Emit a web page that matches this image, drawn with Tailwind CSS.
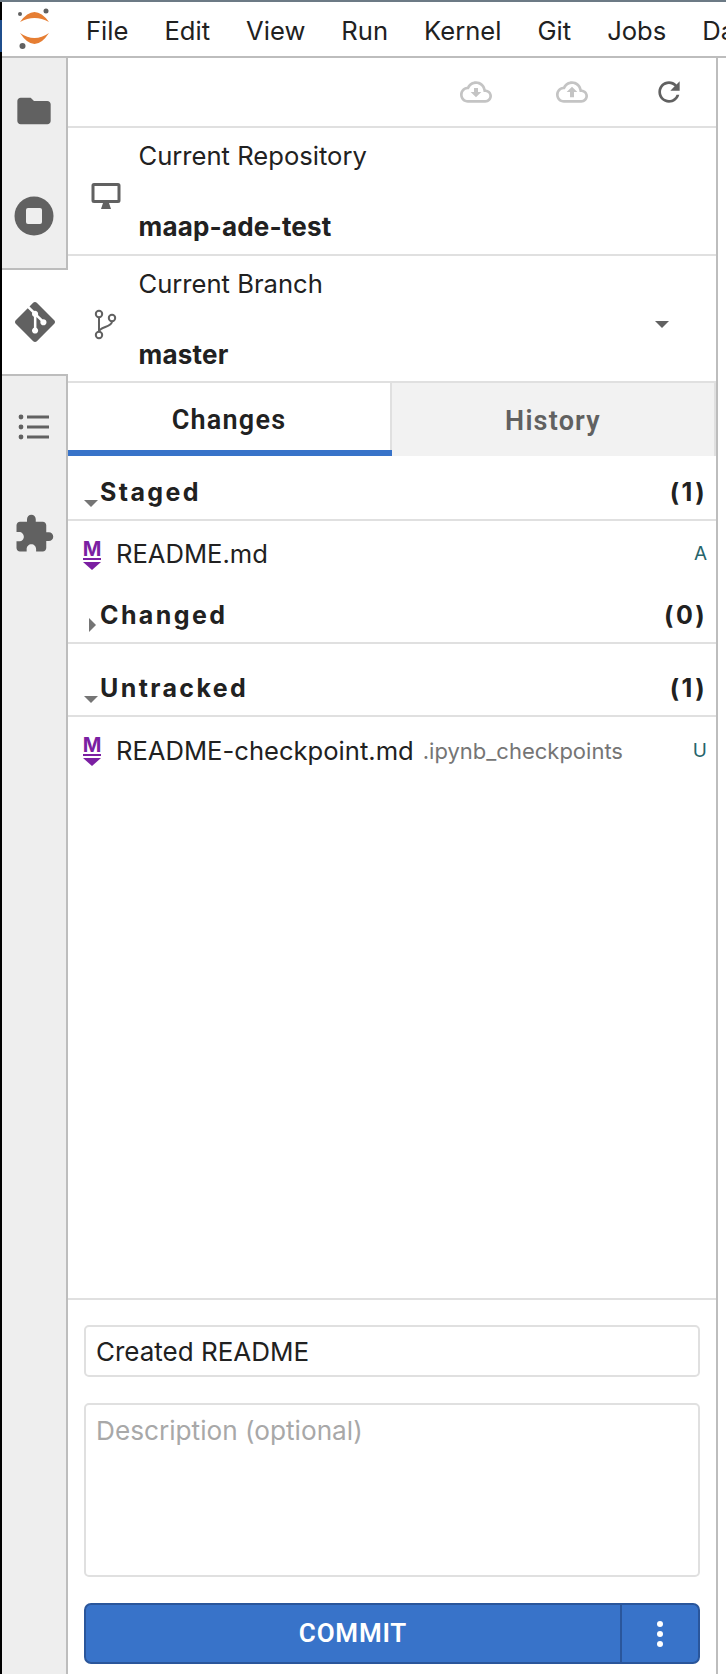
<!DOCTYPE html>
<html lang="en">
<head>
  <meta charset="UTF-8" />
  <title>JupyterLab Git</title>
  <script src="https://cdn.jsdelivr.net/npm/@tailwindcss/browser@4"></script>
</head>
<body class="bg-white font-['Inter','Liberation_Sans',sans-serif] text-[#212121] h-[1674px] w-[726px] overflow-hidden flex flex-col">
  <div class="h-[2px] bg-[#6c7a85] shrink-0"></div>
  <div class="flex flex-1 min-h-0">
    <!-- window edge -->
    <div class="w-[2px] bg-black shrink-0 pt-[18px]">
      <div class="h-[32px] bg-[#1f4e8c]"></div>
    </div>

    <div class="flex-1 min-w-0 flex flex-col">
      <!-- menu bar -->
      <div class="h-[56px] shrink-0 flex border-b-2 border-[#bdbdbd] overflow-hidden">
        <div class="w-[66px] shrink-0">
          <svg width="66" height="54" viewBox="0 0 66 54">
            <circle cx="18" cy="12" r="2" fill="#616161"/>
            <circle cx="44" cy="9" r="2.5" fill="#616161"/>
            <circle cx="20.5" cy="44" r="3" fill="#616161"/>
            <path d="M18 20 Q32.5 0 47 20 Q32.5 12 18 20Z" fill="#e67e33"/>
            <path d="M18 31 Q32.5 53 47 31 Q32.5 41 18 31Z" fill="#e67e33"/>
          </svg>
        </div>
        <div class="flex items-center text-[25.6px] whitespace-nowrap pt-[4px]">
          <span class="px-[18px]">File</span>
          <span class="px-[18px]">Edit</span>
          <span class="px-[18px]">View</span>
          <span class="px-[18px]">Run</span>
          <span class="px-[18px]">Kernel</span>
          <span class="px-[18px]">Git</span>
          <span class="px-[18px]">Jobs</span>
          <span class="px-[18px]">Data</span>
        </div>
      </div>

      <div class="flex-1 min-h-0 flex">
        <!-- activity bar -->
        <div class="w-[66px] shrink-0 bg-[#eeeeee] border-r-2 border-[#bdbdbd] flex flex-col">
          <div class="h-[106px] flex items-center justify-center">
            <svg width="40" height="40" viewBox="0 0 24 24" fill="#616161"><path d="M10 4H4c-1.1 0-1.99.9-1.99 2L2 18c0 1.1.9 2 2 2h16c1.1 0 2-.9 2-2V8c0-1.1-.9-2-2-2h-8l-2-2z"/></svg>
          </div>
          <div class="h-[104px] flex items-center justify-center">
            <svg width="40" height="40" viewBox="0 0 40 40"><circle cx="20" cy="20" r="19.5" fill="#616161"/><rect x="12" y="12" width="16" height="16" rx="2" fill="#eeeeee"/></svg>
          </div>
          <div class="h-[108px] -mr-[2px] bg-white border-y-2 border-[#bdbdbd] flex items-center justify-center">
            <svg width="40" height="40" viewBox="0 0 24 24" fill="#616161"><path d="M23.546 10.93L13.067.452c-.604-.603-1.582-.603-2.188 0L8.708 2.627l2.76 2.76c.645-.215 1.379-.07 1.889.441.516.515.658 1.258.438 1.9l2.658 2.66c.645-.223 1.387-.078 1.9.435.721.72.721 1.884 0 2.604-.719.719-1.881.719-2.6 0-.539-.541-.674-1.337-.404-1.996L12.86 8.955v6.525c.176.086.342.203.488.348.713.721.713 1.883 0 2.6-.719.721-1.889.721-2.609 0-.719-.719-.719-1.879 0-2.598.182-.18.387-.316.605-.406V8.835c-.217-.091-.424-.222-.6-.401-.545-.545-.676-1.342-.396-2.009L7.636 3.7.45 10.881c-.6.605-.6 1.584 0 2.189l10.48 10.477c.604.604 1.582.604 2.186 0l10.43-10.43c.605-.603.605-1.582 0-2.187"/></svg>
          </div>
          <div class="h-[102px] flex items-center justify-center">
            <svg width="32" height="28" viewBox="0 0 32 28" fill="#616161"><circle cx="3" cy="4" r="2.4"/><circle cx="3" cy="14" r="2.4"/><circle cx="3" cy="24" r="2.4"/><rect x="9" y="2.5" width="22" height="3"/><rect x="9" y="12.5" width="22" height="3"/><rect x="9" y="22.5" width="22" height="3"/></svg>
          </div>
          <div class="h-[112px] flex items-center justify-center">
            <svg width="42" height="42" viewBox="0 0 24 24" fill="#616161"><path d="M20.5 11H19V7c0-1.1-.9-2-2-2h-4V3.5C13 2.12 11.88 1 10.5 1S8 2.12 8 3.5V5H4c-1.1 0-1.99.9-1.99 2v3.8H3.5c1.49 0 2.7 1.21 2.7 2.7s-1.21 2.7-2.7 2.7H2V20c0 1.1.9 2 2 2h3.8v-1.5c0-1.49 1.21-2.7 2.7-2.7 1.49 0 2.7 1.21 2.7 2.7V22H17c1.1 0 2-.9 2-2v-4h1.5c1.38 0 2.5-1.12 2.5-2.5S21.88 11 20.5 11z"/></svg>
          </div>
        </div>

        <!-- git panel -->
        <div class="w-[650px] shrink-0 border-r-2 border-[#bdbdbd] flex flex-col">
          <div class="h-[70px] shrink-0 border-b-2 border-[#e0e0e0] flex items-center justify-end pr-[2px]">
            <div class="w-[96px] flex justify-center">
              <svg width="32" height="32" viewBox="0 0 24 24" fill="#c4c4c4"><path d="M19.35 10.04C18.67 6.59 15.64 4 12 4 9.11 4 6.6 5.64 5.35 8.04 2.34 8.36 0 10.91 0 14c0 3.31 2.69 6 6 6h13c2.76 0 5-2.24 5-5 0-2.64-2.05-4.78-4.65-4.96zM19 18H6c-2.21 0-4-1.79-4-4 0-2.05 1.53-3.76 3.56-3.97l1.07-.11.5-.95C8.08 7.14 9.94 6 12 6c2.62 0 4.88 1.86 5.39 4.43l.3 1.5 1.53.11c1.56.1 2.78 1.41 2.78 2.96 0 1.65-1.35 3-3 3z"/><path d="M10.5 9h3v3H16l-4 4-4-4h2.5z"/></svg>
            </div>
            <div class="w-[96px] flex justify-center">
              <svg width="32" height="32" viewBox="0 0 24 24" fill="#c4c4c4"><path d="M19.35 10.04C18.67 6.59 15.64 4 12 4 9.11 4 6.6 5.64 5.35 8.04 2.34 8.36 0 10.91 0 14c0 3.31 2.69 6 6 6h13c2.76 0 5-2.24 5-5 0-2.64-2.05-4.78-4.65-4.96zM19 18H6c-2.21 0-4-1.79-4-4 0-2.05 1.53-3.76 3.56-3.97l1.07-.11.5-.95C8.08 7.14 9.94 6 12 6c2.62 0 4.88 1.86 5.39 4.43l.3 1.5 1.53.11c1.56.1 2.78 1.41 2.78 2.96 0 1.65-1.35 3-3 3z"/><path d="M12 8l4 4h-2.5v4h-3v-4H8z"/></svg>
            </div>
            <div class="w-[90px] ml-[4px] flex justify-center">
              <svg width="32" height="32" viewBox="0 0 24 24" fill="#616161"><path d="M17.65 6.35C16.2 4.9 14.21 4 12 4c-4.42 0-7.99 3.58-7.99 8s3.57 8 7.99 8c3.73 0 6.84-2.55 7.73-6h-2.08c-.82 2.33-3.04 4-5.65 4-3.31 0-6-2.69-6-6s2.69-6 6-6c1.66 0 3.14.69 4.22 1.78L13 11h7V4l-2.35 2.35z"/></svg>
            </div>
          </div>

          <!-- repository -->
          <div class="h-[128px] shrink-0 border-b-2 border-[#e0e0e0] flex items-center pl-[23px]">
            <svg class="shrink-0 mt-[10px]" width="30" height="28" viewBox="0 0 30 28" fill="#616161"><path d="M3 1h24a2.5 2.5 0 0 1 2.5 2.5v15A2.5 2.5 0 0 1 27 21H3a2.5 2.5 0 0 1-2.5-2.5v-15A2.5 2.5 0 0 1 3 1zm.5 3v14h23V4z"/><path d="M12 21h6l2 6H10z"/></svg>
            <div class="ml-[17.5px] h-full flex flex-col justify-between pt-[11px] pb-[10px]">
              <div class="text-[25.6px] leading-[34px]">Current Repository</div>
              <div class="text-[26px] leading-[34px] font-bold tracking-[0.2px]">maap-ade-test</div>
            </div>
          </div>

          <!-- branch -->
          <div class="h-[127px] shrink-0 border-b-2 border-[#e0e0e0] flex items-center pl-[21px] pr-[47px]">
            <svg class="shrink-0 mt-[12px]" width="32" height="32" viewBox="0 0 32 32" fill="none" stroke="#616161" stroke-width="2"><circle cx="10" cy="5" r="3.2"/><circle cx="10" cy="26" r="3.2"/><circle cx="23" cy="9" r="3.2"/><path d="M10 8.5V23M23 12.5c0 6-13 5-13 10.5"/></svg>
            <div class="ml-[17.5px] h-full flex-1 flex flex-col justify-between pt-[11px] pb-[9px]">
              <div class="text-[25.6px] leading-[34px]">Current Branch</div>
              <div class="text-[26px] leading-[34px] font-bold tracking-[0.2px]">master</div>
            </div>
            <div class="w-0 h-0 mt-[12px] border-x-[7px] border-x-transparent border-t-[7px] border-t-[#616161]"></div>
          </div>

          <!-- tabs -->
          <div class="h-[73px] shrink-0 flex font-['Roboto','Liberation_Sans',sans-serif] text-[27px] font-semibold tracking-[1.2px]">
            <div class="w-[324px] flex flex-col">
              <div class="flex-1 border-r-2 border-[#e0e0e0] flex items-center justify-center pt-[8px]">Changes</div>
              <div class="h-[6px] bg-[#3873c9]"></div>
            </div>
            <div class="flex-1 bg-[#f2f2f2] text-[#616161] border-r-2 border-[#e0e0e0] flex items-center justify-center pt-[3px]">History</div>
          </div>

          <!-- file lists -->
          <div class="flex-1 min-h-0">
            <div class="h-[65px] border-b-2 border-[#e0e0e0] flex items-end justify-between pl-[16px] pr-[9px] pb-[10px]">
              <div class="flex items-end">
                <div class="w-0 h-0 mb-[2px] mr-[2px] border-x-[7px] border-x-transparent border-t-[7px] border-t-[#757575]"></div>
                <span class="text-[25px] leading-[34px] font-bold tracking-[2.4px]">Staged</span>
              </div>
              <span class="text-[25px] leading-[34px] font-bold tracking-[2.4px]">(1)</span>
            </div>
            <div class="h-[64px] flex items-center pl-[15px] pr-[9px] pt-[3px]">
              <div class="w-[18px] flex flex-col items-center shrink-0">
                <span class="text-[20px] leading-[18px] font-bold text-[#7b1fa2]">M</span>
                <div class="w-[18px] h-[2px] bg-[#7b1fa2]"></div>
                <div class="w-0 h-0 mt-[2px] border-x-[9px] border-x-transparent border-t-[8px] border-t-[#7b1fa2]"></div>
              </div>
              <span class="ml-[15px] text-[25.6px] flex-1">README.md</span>
              <span class="text-[19px] text-[#26646b]">A</span>
            </div>
            <div class="h-[59px] border-b-2 border-[#e0e0e0] flex items-end justify-between pl-[21px] pr-[9px] pb-[10px]">
              <div class="flex items-end">
                <div class="w-0 h-0 mr-[4px] border-y-[7px] border-y-transparent border-l-[7px] border-l-[#757575]"></div>
                <span class="text-[25px] leading-[34px] font-bold tracking-[2.4px]">Changed</span>
              </div>
              <span class="text-[25px] leading-[34px] font-bold tracking-[2.4px]">(0)</span>
            </div>
            <div class="h-[73px] border-b-2 border-[#e0e0e0] flex items-end justify-between pl-[16px] pr-[9px] pb-[10px]">
              <div class="flex items-end">
                <div class="w-0 h-0 mb-[2px] mr-[2px] border-x-[7px] border-x-transparent border-t-[7px] border-t-[#757575]"></div>
                <span class="text-[25px] leading-[34px] font-bold tracking-[2.4px]">Untracked</span>
              </div>
              <span class="text-[25px] leading-[34px] font-bold tracking-[2.4px]">(1)</span>
            </div>
            <div class="h-[68px] flex items-center pl-[15px] pr-[9px]">
              <div class="w-[18px] flex flex-col items-center shrink-0">
                <span class="text-[20px] leading-[18px] font-bold text-[#7b1fa2]">M</span>
                <div class="w-[18px] h-[2px] bg-[#7b1fa2]"></div>
                <div class="w-0 h-0 mt-[2px] border-x-[9px] border-x-transparent border-t-[8px] border-t-[#7b1fa2]"></div>
              </div>
              <span class="ml-[15px] text-[25.6px]">README-checkpoint.md</span>
              <span class="ml-[9px] text-[22px] text-[#757575] flex-1">.ipynb_checkpoints</span>
              <span class="text-[19px] text-[#26646b]">U</span>
            </div>
          </div>

          <!-- commit box -->
          <div class="h-[376px] shrink-0 border-t-2 border-[#e0e0e0] px-[16px] pt-[25px]">
            <div class="h-[52px] border-2 border-[#e0e0e0] rounded-[5px] flex items-center px-[10px] text-[26px]">Created README</div>
            <div class="h-[174px] mt-[26px] border-2 border-[#e0e0e0] rounded-[5px] px-[10px] pt-[9px] text-[26.2px] leading-[34px] text-[#a8a8a8]">Description (optional)</div>
            <div class="h-[61px] mt-[26px] flex rounded-[7px] border-2 border-[#2a569b] bg-[#3873c9] text-white">
              <div class="flex-1 flex items-center justify-center text-[26px] font-semibold tracking-[0.8px] font-['Roboto','Liberation_Sans',sans-serif]">COMMIT</div>
              <div class="w-[78px] border-l-2 border-[#2a569b] flex items-center justify-center">
                <svg width="8" height="28" viewBox="0 0 8 28" fill="#fff"><circle cx="4" cy="4" r="3"/><circle cx="4" cy="14" r="3"/><circle cx="4" cy="24" r="3"/></svg>
              </div>
            </div>
          </div>
        </div>
      </div>
    </div>
  </div>
</body>
</html>
